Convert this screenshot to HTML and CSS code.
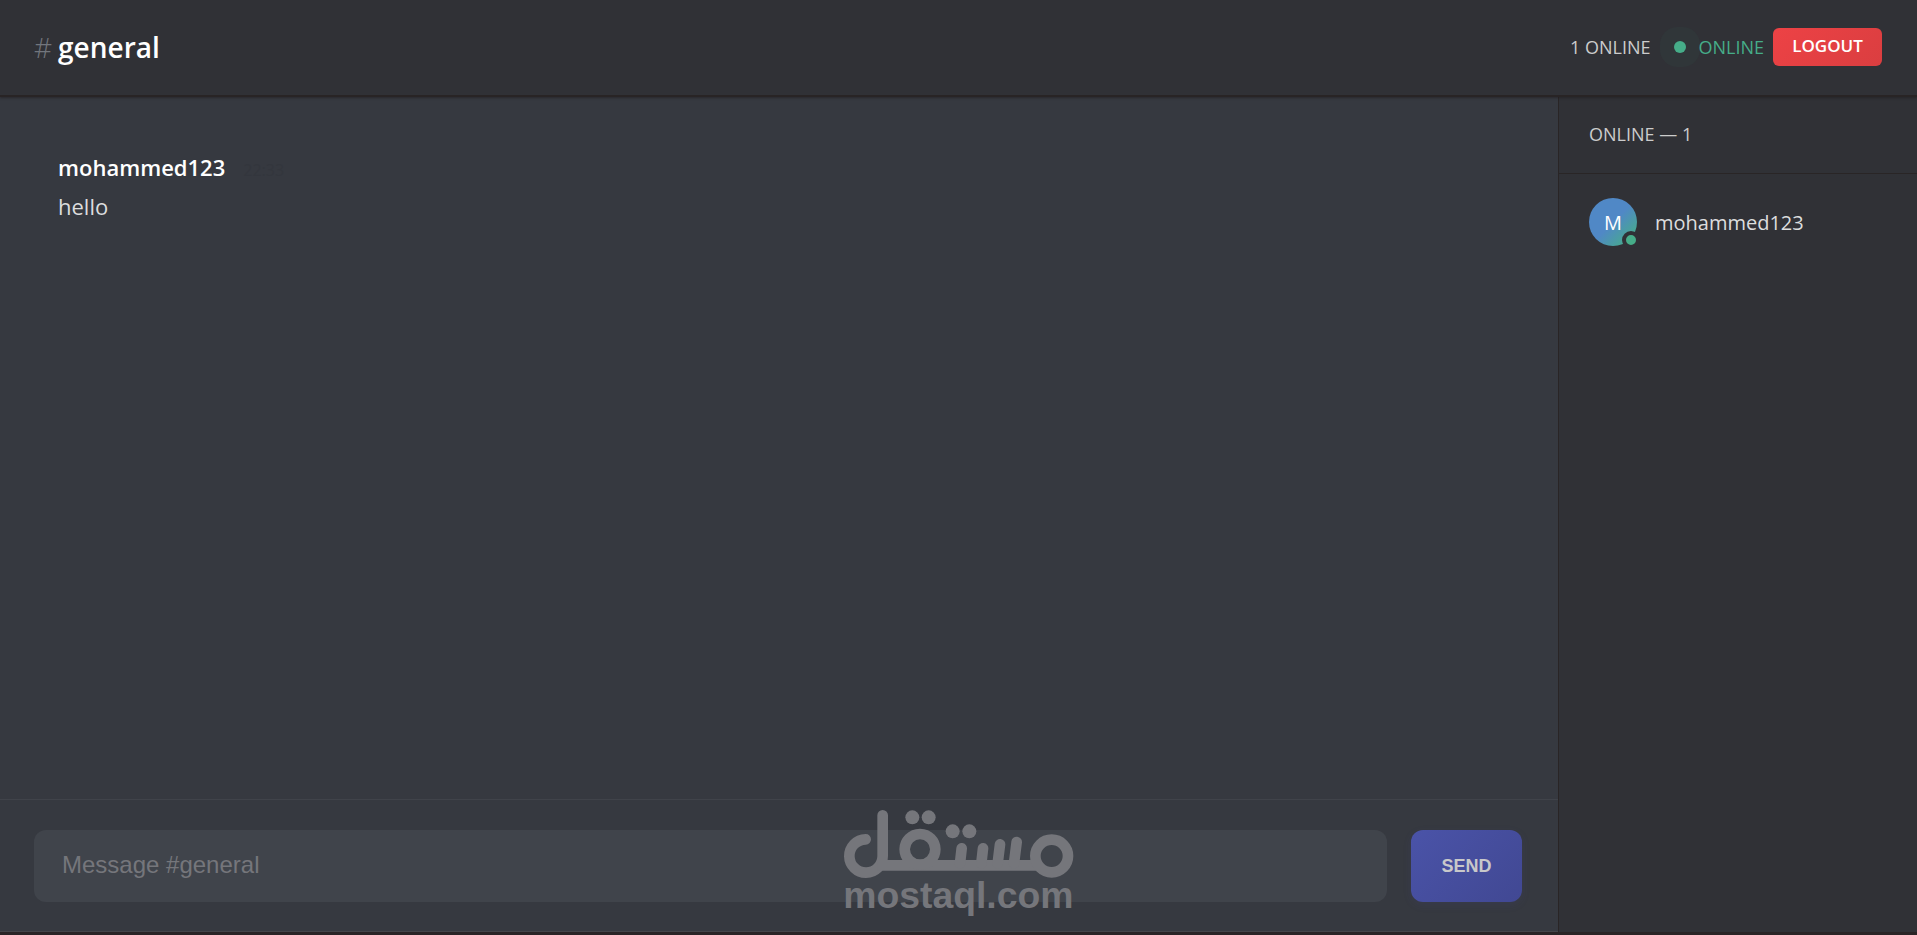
FILE: index.html
```html
<!DOCTYPE html>
<html lang="en">
<head>
<meta charset="utf-8">
<title>general</title>
<link rel="stylesheet" href="styles.css">
</head>
<body>
<div class="app">
  <header class="topbar">
    <h1 class="channel"><span class="hash">#</span>general</h1>
    <div class="session">
      <span class="count">1 ONLINE</span>
      <span class="status"><span class="status-dot"></span>ONLINE</span>
      <button class="logout" type="button">LOGOUT</button>
    </div>
  </header>
  <div class="body">
    <main class="chat">
      <section class="messages">
        <article class="message">
          <div class="meta"><span class="author">mohammed123</span><time class="time">22:33</time></div>
          <p class="text">hello</p>
        </article>
      </section>
      <form class="composer">
        <input class="field" type="text" placeholder="Message #general" aria-label="Message #general">
        <button class="send" type="button">SEND</button>
      </form>
    </main>
    <aside class="members">
      <h2 class="members-title">ONLINE — 1</h2>
      <ul class="member-list">
        <li class="member"><span class="avatar">M<span class="presence"></span></span><span class="name">mohammed123</span></li>
      </ul>
    </aside>
  </div>
  <svg class="watermark" viewBox="-5 0 840 435" role="img" aria-label="مستقل mostaql.com">
    <g fill="none" stroke="currentColor" stroke-width="32" stroke-linecap="round">
      <path d="M135 148A50 50 0 1 0 186 198V76"/>
      <path d="M170 226H657" stroke-linecap="butt"/>
      <circle cx="298" cy="178" r="46"/>
      <circle cx="693" cy="198" r="49"/>
      <path d="M423 175L418 220M487 175L482 220M538 163L531 220M588 156L580 220"/>
    </g>
    <g fill="currentColor">
      <circle cx="275" cy="82" r="21"/><circle cx="324" cy="82" r="21"/>
      <circle cx="396" cy="124" r="21"/><circle cx="446" cy="124" r="21"/>
      <text class="watermark-text" x="413" y="353" text-anchor="middle">mostaql.com</text>
    </g>
  </svg>
</div>
</body>
</html>
```
FILE: styles.css
```css
* { box-sizing: border-box; }
body {
  margin: 0;
  background: #363940;
  color: #dcddde;
  font-family: "Open Sans", "Noto Sans", sans-serif;
}
h1, h2, p, ul { margin: 0; padding: 0; }
.app {
  position: relative;
  display: flex;
  flex-direction: column;
  height: 100vh;
  border-bottom: 3px solid #2a2426;
}
.topbar {
  position: relative;
  display: flex;
  align-items: center;
  justify-content: space-between;
  height: 97px;
  flex: none;
  padding: 0 35px 2px 34px;
  background: #303136;
  border-bottom: 2px solid #282425;
  box-shadow: 0 1px 2px rgba(32, 28, 30, .6);
}
.channel {
  display: flex;
  align-items: center;
  gap: 6px;
  color: #fff;
  font-size: 28px;
  line-height: 40px;
  font-weight: 600;
}
.hash { color: #72767d; font-weight: 300; }
.session {
  display: flex;
  align-items: center;
  font-size: 18px;
  line-height: 24px;
}
.count { color: #ccc; }
.status {
  display: flex;
  align-items: center;
  gap: 12px;
  margin: 0 9px 0 24px;
  color: #46ad89;
}
.status-dot {
  width: 12px;
  height: 12px;
  border-radius: 50%;
  background: #46ad89;
  box-shadow: 0 0 0 14px #303639;
}
.logout {
  min-width: 109px;
  height: 38px;
  padding: 0 18px 2px;
  border: 0;
  border-radius: 6px;
  background: linear-gradient(135deg, #ed4245, #da3e40);
  color: #fff;
  font: 600 17px/24px "Open Sans", "Noto Sans", sans-serif;
}
.status, .logout { position: relative; }
.body { display: flex; flex: 1; min-height: 0; }
.chat { display: flex; flex: 1; flex-direction: column; min-width: 0; border-bottom: 1px solid #45454a; }
.messages { flex: 1; padding: 53px 58px; }
.meta { display: flex; align-items: baseline; gap: 18px; line-height: 34px; }
.author { color: #fff; font-size: 22px; font-weight: 600; }
.time { color: #33363d; font-size: 16px; }
.text { font-size: 22px; line-height: 38px; }
.composer {
  display: flex;
  gap: 24px;
  padding: 30px 36px 29px 34px;
  border-top: 1px solid #40434a;
}
.field {
  flex: 1;
  min-width: 0;
  height: 72px;
  padding: 0 28px 2px;
  border: 0;
  border-radius: 12px;
  background: #40444b;
  color: #dcddde;
  font: 24px "Liberation Sans", Arial, sans-serif;
}
.field::placeholder { color: #75767b; opacity: 1; }
.send {
  min-width: 111px;
  height: 72px;
  padding: 0 30px;
  border: 0;
  border-radius: 12px;
  background: linear-gradient(135deg, #4a53a8, #414893);
  box-shadow: 0 3px 8px rgba(70, 78, 160, .12);
  color: #c8c8ca;
  font: bold 18px "Liberation Sans", Arial, sans-serif;
}
.members {
  width: 359px;
  flex: none;
  background: #303136;
  border-left: 1px solid #292526;
}
.members-title {
  padding: 24px 30px 26px;
  border-bottom: 1px solid #292526;
  color: #ccc;
  font-size: 18px;
  font-weight: 400;
  line-height: 26px;
}
.member-list { padding: 24px 30px; list-style: none; }
.member { display: flex; align-items: center; gap: 18px; }
.avatar {
  position: relative;
  display: grid;
  place-items: center;
  width: 48px;
  height: 48px;
  border-radius: 50%;
  background: linear-gradient(135deg, #5088c6 50%, #46ad89 90%);
  color: #fff;
  font-size: 20px;
  font-weight: 500;
}
.presence {
  position: absolute;
  right: -3px;
  bottom: -3px;
  width: 18px;
  height: 18px;
  border: 4px solid #303136;
  border-radius: 50%;
  background: #46ad89;
}
.name { font-size: 20px; }
.watermark {
  position: absolute;
  left: 50%;
  bottom: -3px;
  width: 280px;
  height: 145px;
  transform: translateX(-50%);
  color: #75767b;
  pointer-events: none;
}
.watermark-text { font: bold 112px "Liberation Sans", Arial, sans-serif; }
```
